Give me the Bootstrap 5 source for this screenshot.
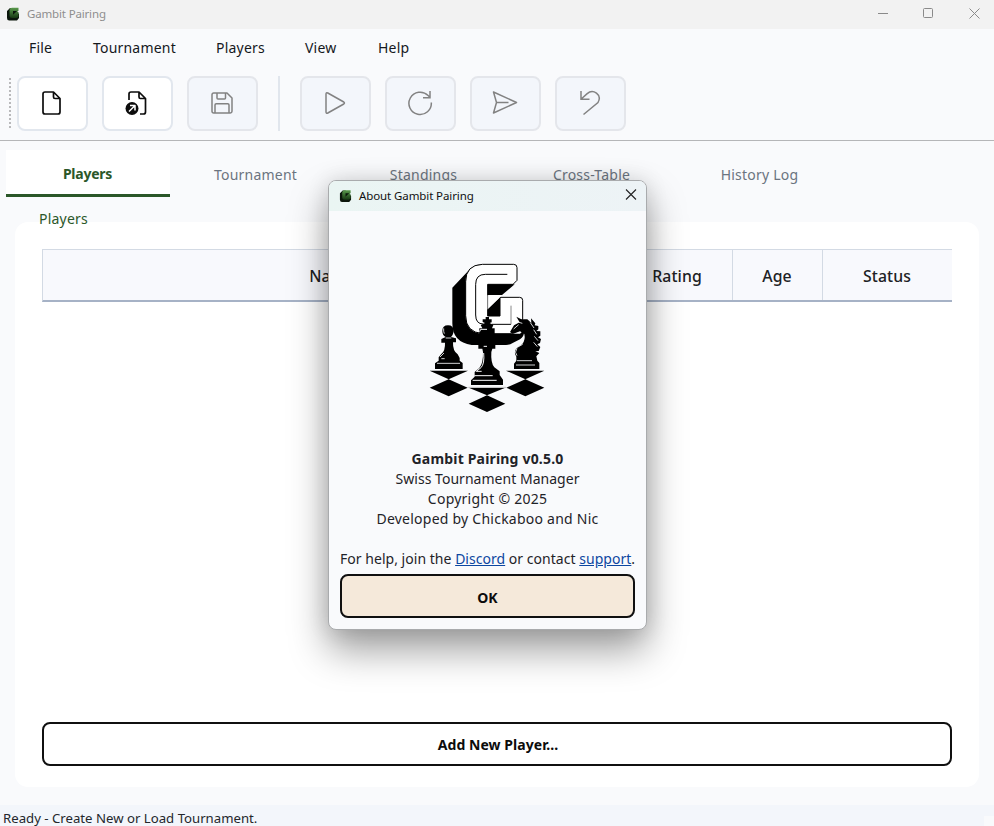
<!DOCTYPE html>
<html lang="en">
<head>
<meta charset="utf-8">
<meta name="viewport" content="width=device-width, initial-scale=1">
<title>Gambit Pairing</title>
<link href="https://cdn.jsdelivr.net/npm/bootstrap@5.3.0/dist/css/bootstrap.min.css" rel="stylesheet">
<style>
body{font-family:"Noto Sans","Open Sans",sans-serif;font-size:14px;line-height:20px;color:#1f2328;background:#f9fafc;height:826px}
svg{display:block;flex:none}
.title-bar{height:28.5px;background:#f2f2f2;color:#8e8e8e;font-size:11.5px;letter-spacing:-.16px;padding-left:6px}
.title-gap{margin-left:7px}
.win-controls{gap:35px;padding:0 14px 1px 0;color:#8a8a8a}
.menu-row{height:38px;padding:0 0 0 29px;color:#15181d}
.menu-row a{color:inherit;text-decoration:none;font-size:14px;letter-spacing:.2px}
.tool-row{height:74px;padding:0 0 0 9px;border-bottom:1px solid #b5b6b8}
.grip{width:2px;height:51px;margin-right:6px;background:repeating-linear-gradient(#b9b9bb 0 2px,transparent 2px 4px)}
.tool-btn{width:71px;height:55px;border:2px solid #e2e7ee;border-radius:8px;background:#fff;color:#0c0c0c;padding:0 1px 0 0;margin-right:14px}
.tool-btn:disabled{background:#f3f6fb;border-color:#e4e6eb;color:#828282;opacity:1}
.tool-sep{width:2px;height:55px;background:#e1e6ed;margin:0 20px 0 6px}
.tab-row{padding:9px 0 0 6px;gap:4px;--bs-nav-link-padding-x:0;--bs-nav-link-padding-y:0}
.tab-row .nav-link{width:164px;height:47px;line-height:47px;text-align:center;color:#6b7480;font-size:14px;letter-spacing:.22px;padding:1px 1px 0 0}
.tab-row .nav-link.active{background:#fff;color:#2b5729;font-weight:700;border-bottom:3px solid #2b5729;padding:0 1px 0 0;letter-spacing:-.25px}
.group-label{height:25px;padding:12px 0 0 39px;color:#2b5729;letter-spacing:.2px;position:relative;z-index:1}
.panel{width:964px;height:565px;margin-left:15px;border-radius:13px;background:#fff;padding:27px 27px 21px}
.head-row{width:910px;height:53px;background:#f8f9fd;border-top:1px solid #d3dae4;border-bottom:2px solid #a6b2c6;border-left:1px solid #d3dae4;font-size:15.8px;letter-spacing:.1px;font-weight:500;color:#202124}
.head-row>div{border-right:1px solid #d3dae4;display:flex;align-items:center;justify-content:center;padding:2px 1px 0 0}
.head-row>div:last-child{border-right:0}
.w-name{width:580px}.w-rating{width:110px}.w-age{width:90px}.w-status{width:129px}
.main-btn{width:100%;height:44px;border:2px solid #101010;border-radius:8px;font-size:14px;letter-spacing:.05px;font-weight:700;color:#0c0c0c;padding:2px 0 0 2px}
.main-btn.tan{background:#f5e9da;margin-top:5px;padding-left:0}
.status-row{height:21px;margin-top:18px;background:#f3f6fb;padding:3px 0 0 3px;font-size:13.2px;color:#24272c}
.size-grip{width:10px;height:10px;background:#f9fafc;margin-top:8px}
.about-box{left:328px;top:180px;width:319px;height:450px;border:1px solid #a9abad;border-radius:8px;background:#f9fafc;box-shadow:0 20px 38px rgba(0,0,0,.38),0 0 22px rgba(0,0,0,.12);z-index:5;overflow:hidden}
.about-title{height:30px;background:linear-gradient(90deg,#eaf5f3,#edf3f6);font-size:11.5px;letter-spacing:-.1px;color:#111;padding:0 9px 0 10px}
.about-content{padding:44px 11px 0}
.about-text{margin-top:29px;white-space:nowrap;letter-spacing:.03px}
.about-text strong{letter-spacing:.18px}
.about-text .credit{letter-spacing:.24px}
.about-text a{color:#0d47a1;text-decoration:underline}
</style>
<script src="https://cdn.jsdelivr.net/npm/bootstrap@5.3.0/dist/js/bootstrap.bundle.min.js"></script>
</head>
<body class="overflow-hidden position-relative">
<svg width="0" height="0" class="position-absolute">
<defs>
<linearGradient id="gg" x1="0" y1="0" x2="0" y2="1"><stop offset="0" stop-color="#5a9a4c"/><stop offset="1" stop-color="#163812"/></linearGradient>
<symbol id="app-icon" viewBox="0 0 14 14"><path d="M1 4 4 1h3l6 6v4l-2 2.500H4Q1 14 1 11z" fill="#0b160b"/><path d="M3.500 3Q3.500.700 6 .700h6.500v3L11 5h1.500v4.500Q12 11 10 11H6Q3.500 11 3.500 9z" fill="url(#gg)"/><path d="M7 4h4L9.500 5.500 7 7.800z" fill="#0a160a"/></symbol>
</defs>
</svg>

<header class="title-bar d-flex align-items-center">
<svg width="14" height="14"><use href="#app-icon"/></svg>
<span class="title-gap">Gambit Pairing</span>
<div class="win-controls d-flex ms-auto">
<svg width="11" height="11" fill="none" stroke="currentColor"><path d="M1 5.500h10"/></svg>
<svg width="11" height="11" fill="none" stroke="currentColor"><rect x=".5" y=".5" width="9" height="9" rx="1"/></svg>
<svg width="11" height="11" fill="none" stroke="currentColor"><path d="M.5.500l10 10M10.500.500l-10 10"/></svg>
</div>
</header>

<nav class="menu-row d-flex align-items-center">
<a href="#" style="width:64px">File</a><a href="#" style="width:123px">Tournament</a><a href="#" style="width:89px">Players</a><a href="#" style="width:73px">View</a><a href="#">Help</a>
</nav>

<div class="tool-row d-flex align-items-center">
<div class="grip"></div>
<button class="btn tool-btn d-flex align-items-center justify-content-center" aria-label="New"><svg width="24" height="26" viewBox="0 0 24 26" fill="none" stroke="currentColor" stroke-width="1.700" stroke-linejoin="round"><path d="M5 2h8.500l6.500 6.500V22q0 2-2 2H5q-2 0-2-2V4q0-2 2-2zM13.500 2v5q0 1.500 1.500 1.500h5"/></svg></button>
<button class="btn tool-btn d-flex align-items-center justify-content-center" aria-label="Open"><svg width="24" height="26" viewBox="0 0 24 26" fill="none" stroke="currentColor" stroke-width="1.700" stroke-linejoin="round"><path d="M4 10V4q0-2 2-2h8l6.500 6.500V22q0 2-2 2H15M14 2v5q0 1.500 1.500 1.500h5"/><circle cx="7" cy="18.500" r="6.500" fill="currentColor" stroke="none"/><path d="M4 21.500l5.500-5.500M5 15.500h5V20.500" stroke="#fff" stroke-width="1.500"/></svg></button>
<button class="btn tool-btn d-flex align-items-center justify-content-center" disabled aria-label="Save"><svg width="24" height="24" viewBox="0 0 24 24" fill="none" stroke="currentColor" stroke-width="1.500" stroke-linejoin="round"><path d="M3.700 2H17l5 5v13.300q0 1.700-1.700 1.700H3.700Q2 22 2 20.300V3.700Q2 2 3.700 2zM7 2v5q0 1 1 1h6.500q1 0 1-1V2M5 22v-8q0-1.200 1.200-1.200h11.600Q19 12.800 19 14v8"/></svg></button>
<div class="tool-sep"></div>
<button class="btn tool-btn d-flex align-items-center justify-content-center" disabled aria-label="Start"><svg width="24" height="24" viewBox="0 0 24 24" fill="none" stroke="currentColor" stroke-width="1.500" stroke-linejoin="round"><path d="M3 3.200q0-2 1.800-1.200l16 9q1.300 1 0 2l-16 9Q3 22.800 3 20.800z"/></svg></button>
<button class="btn tool-btn d-flex align-items-center justify-content-center" disabled aria-label="Repeat"><svg width="26" height="26" viewBox="0 0 26 26" fill="none" stroke="currentColor" stroke-width="1.500"><path d="M24.300 12.500a11.200 11.200 0 1 1-3.200-7l2 2M23 1v6.700h-7"/></svg></button>
<button class="btn tool-btn d-flex align-items-center justify-content-center" disabled aria-label="Send"><svg width="26" height="26" viewBox="0 0 26 26" fill="none" stroke="currentColor" stroke-width="1.500" stroke-linejoin="round"><path d="M1.500 2 24.500 12.500 1.500 23 4.500 12.500zM4.500 12.500h12"/></svg></button>
<button class="btn tool-btn d-flex align-items-center justify-content-center" disabled aria-label="Undo"><svg width="24" height="26" viewBox="0 0 24 26" fill="none" stroke="currentColor" stroke-width="1.500"><path d="M3 1v8.200h8.500M3.200 9l6-5.400C15-1.500 24.500 4.500 20 12.500L5.500 24.500"/></svg></button>
</div>

<ul class="nav tab-row">
<li><a class="nav-link active" href="#">Players</a></li>
<li><a class="nav-link" href="#">Tournament</a></li>
<li><a class="nav-link" href="#">Standings</a></li>
<li><a class="nav-link" href="#">Cross-Table</a></li>
<li><a class="nav-link" href="#">History Log</a></li>
</ul>

<div class="group-label">Players</div>
<main class="panel d-flex flex-column justify-content-between">
<div class="head-row d-flex">
<div class="w-name">Name</div><div class="w-rating">Rating</div><div class="w-age">Age</div><div class="w-status">Status</div>
</div>
<button class="btn main-btn">Add New Player...</button>
</main>

<footer class="status-row d-flex justify-content-between"><span>Ready - Create New or Load Tournament.</span><span class="size-grip"></span></footer>

<section class="about-box position-absolute">
<div class="about-title d-flex align-items-center">
<svg width="13" height="14"><use href="#app-icon"/></svg><span class="title-gap">About Gambit Pairing</span>
<svg class="ms-auto mb-1" width="12" height="12" fill="none" stroke="#222" stroke-width="1.100"><path d="M1 1.500l10 10M11 1.500 1 11.500"/></svg>
</div>
<div class="about-content text-center">
<svg class="mx-auto" width="135" height="165" viewBox="0 0 405 495">
<path d="M97 98 148 44Q160 30 185 28L200 236 300 236 312 225Q314 245 300 253L278 264Q268 270 258 270H155Q97 262 97 205z"/>
<path d="M187 28H281Q291 28 291 38V76L279 88H203V183H240V127H299Q308 127 308 136V192L275 236H188Q137 232 137 182V80Q137 30 187 28z" fill="#fff" stroke="#000" stroke-width="3"/>
<path d="M203 88H284L246 120H203zM240 127V183H203V163z"/>
<path d="M203 121H246L203 162z" fill="#fff"/>
<path d="M262 58H196Q167 58 167 88V180Q167 207 190 207M215 208H273" fill="none" stroke="#000" stroke-width="3"/>
<path d="M273 208V152M203 121V163" fill="none" stroke="#888" stroke-width="3"/>
<path d="M29 347H144L86 373zM86 373 143 398 86 424 29 398zM258 347H373L316 373zM316 373 373 398 316 424 259 398zM148 399H254L201 421zM201 421 256 446 201 471 146 446z"/>
<!-- pawn -->
<path d="M67 228Q67 211 84 211 101 211 101 228 99 242 93 246L108 250V262H99Q98 288 113 298L119 309V317L128 324V342H45V325L56 317V307L64 297Q76 287 75 263H64V252L77 246Q67 241 67 228z"/>
<path d="M71 220Q70 230 73 236M77 249H94M60 306 72 294M64 311H74M51 325H120" fill="none" stroke="#f9fafc" stroke-width="2.500"/>
<!-- king -->
<g stroke="#f9fafc" stroke-width="2"><path d="M197 186H207V193H215V202L209 204 220 210 216 220H224V239L216 246V265H226V281H217L214 291Q212 325 223 337L239 349V360L249 374V390H153V376L164 365V351L178 339Q190 325 189 291L187 281H175V265H187V246L178 238V220H187L182 210 195 204 188 201V193H197z" stroke="none"/><path d="M179 230 182 223H201M191 274H201M191 294Q194 326 183 338L169 349H185M163 362H218M158 376H230" fill="none" stroke-width="3"/></g>
<path d="M145 397H258" stroke="#bbb" stroke-width="3"/>
<!-- knight -->
<path d="M289 185 304 193 322 193 334 204 333 190 346 205 344 211 355 213 355 223 349 228 361 229 361 242 354 247 363 252 360 264 352 268 361 276 356 288 346 289 358 294 349 304 352 317 358 324V342H282V326L289 317V305Q279 291 291 278L307 267Q317 254 313 237L300 229 278 237 270 231 282 211 299 202z"/>
<path d="M281 222 296 209M297 202 307 205M331 203 342 219M341 224 350 238M343 244 354 257M341 262 352 275M291 280Q282 292 291 302M291 317H336M288 330H345M292 277 308 268" fill="none" stroke="#f9fafc" stroke-width="2.500"/>
</svg>
<div class="about-text"><strong>Gambit Pairing v0.5.0</strong><br>Swiss Tournament Manager<br><span class="credit">Copyright © 2025<br>Developed by Chickaboo and Nic</span><br><br>For help, join the <a href="#">Discord</a> or contact <a href="#">support</a>.</div>
<button class="btn main-btn tan">OK</button>
</div>
</section>
</body>
</html>
